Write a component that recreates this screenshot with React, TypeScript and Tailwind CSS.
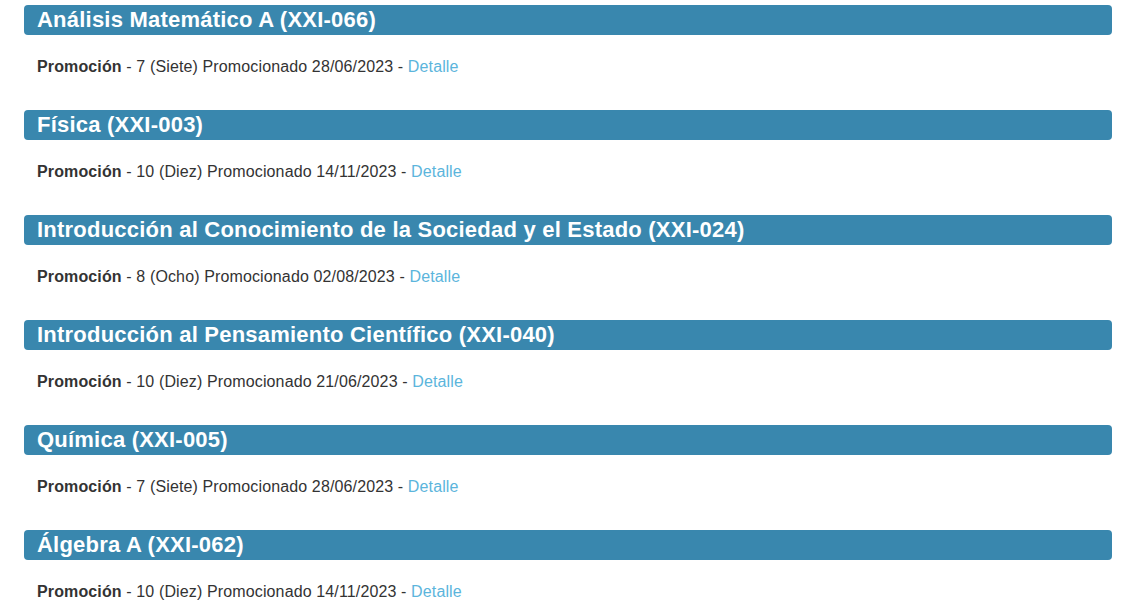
import React from "react";

const items = [
  { t: "Análisis Matemático A (XXI-066)", d: "7 (Siete) Promocionado 28/06/2023" },
  { t: "Física (XXI-003)", d: "10 (Diez) Promocionado 14/11/2023" },
  { t: "Introducción al Conocimiento de la Sociedad y el Estado (XXI-024)", d: "8 (Ocho) Promocionado 02/08/2023" },
  { t: "Introducción al Pensamiento Científico (XXI-040)", d: "10 (Diez) Promocionado 21/06/2023" },
  { t: "Química (XXI-005)", d: "7 (Siete) Promocionado 28/06/2023" },
  { t: "Álgebra A (XXI-062)", d: "10 (Diez) Promocionado 14/11/2023" },
];

export default function App() {
  return (
    <div
      className="min-h-[614px] bg-white pt-[5px] pl-[24px] pr-[11px]"
      style={{ fontFamily: '"Liberation Sans", Arial, sans-serif' }}
    >
      {items.map((it) => (
        <div key={it.t}>
          <h3 className="h-[30px] rounded-[4px] bg-[#3987ae] pl-[13px] text-[22px] font-bold leading-[30px] tracking-[0.22px] text-white">
            {it.t}
          </h3>
          <p className="mt-[22px] mb-[33px] pl-[13px] text-[16px] leading-[20px] tracking-[0.13px] text-[#333]">
            <b>Promoción</b> - {it.d} - <a className="text-[#5bb5dc]">Detalle</a>
          </p>
        </div>
      ))}
    </div>
  );
}
